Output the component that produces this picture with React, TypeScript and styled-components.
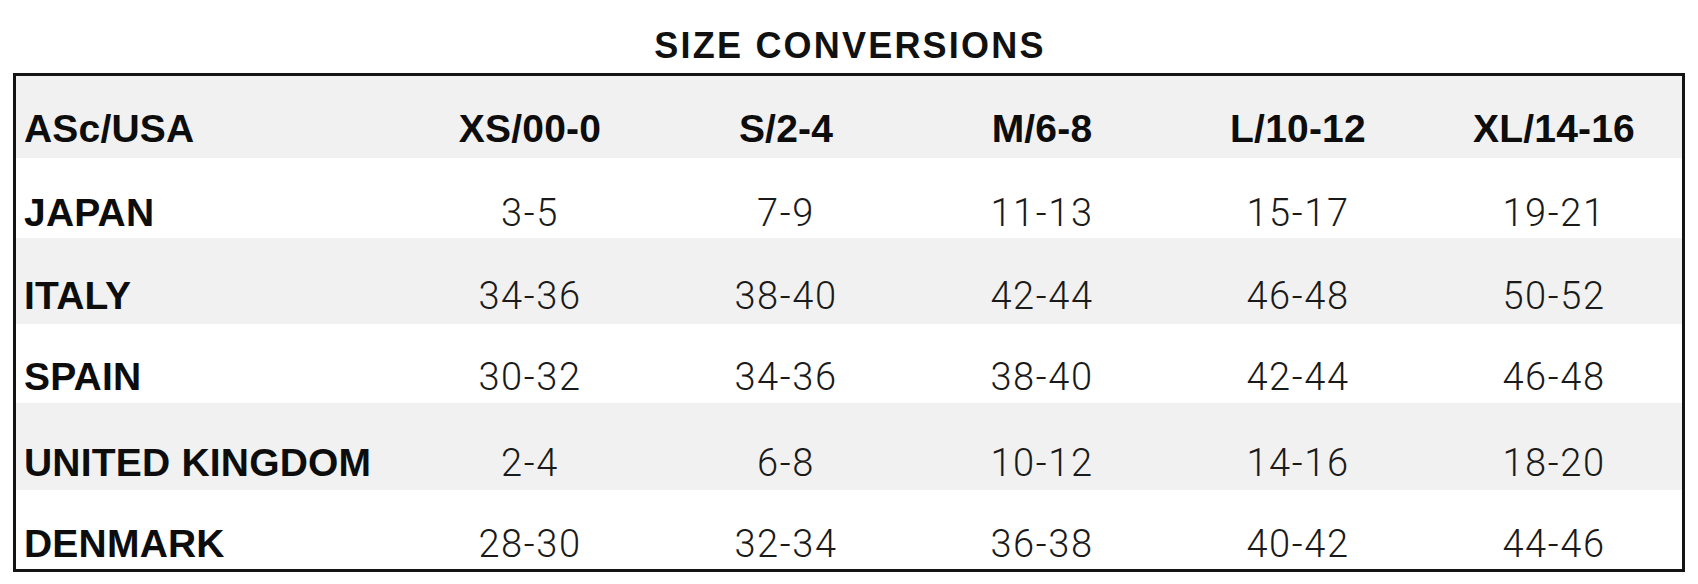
import * as React from 'react'
import styled, { createGlobalStyle } from 'styled-components'

const GlobalStyle = createGlobalStyle`
  html, body {
    margin: 0;
    padding: 0;
    background: #ffffff;
  }
  body {
    font-family: 'Liberation Sans', Arial, sans-serif;
    color: #111111;
  }
`

interface IRow {
  label: string
  values: string[]
  height: number
  bottom: number
  shaded: boolean
}

const HEADERS = ['XS/00-0', 'S/2-4', 'M/6-8', 'L/10-12', 'XL/14-16']

const ROWS: IRow[] = [
  { label: 'JAPAN', values: ['3-5', '7-9', '11-13', '15-17', '19-21'], height: 80, bottom: 6, shaded: false },
  { label: 'ITALY', values: ['34-36', '38-40', '42-44', '46-48', '50-52'], height: 86, bottom: 9, shaded: true },
  { label: 'SPAIN', values: ['30-32', '34-36', '38-40', '42-44', '46-48'], height: 79, bottom: 7, shaded: false },
  { label: 'UNITED KINGDOM', values: ['2-4', '6-8', '10-12', '14-16', '18-20'], height: 87, bottom: 8, shaded: true },
  { label: 'DENMARK', values: ['28-30', '32-34', '36-38', '40-42', '44-46'], height: 79, bottom: 6, shaded: false },
]

const App = () => {
  return (
    <Page>
      <GlobalStyle />
      <Title>SIZE CONVERSIONS</Title>
      <Table>
        <Row height={82} bottom={10} shaded>
          <Label>ASc/USA</Label>
          {HEADERS.map(h => (
            <HeadCell key={h}>{h}</HeadCell>
          ))}
        </Row>
        {ROWS.map(row => (
          <Row key={row.label} height={row.height} bottom={row.bottom} shaded={row.shaded}>
            <Label>{row.label}</Label>
            {row.values.map((v, i) => (
              <Cell key={i}>{v}</Cell>
            ))}
          </Row>
        ))}
      </Table>
    </Page>
  )
}

const Page = styled.div`
  width: 1672px;
  padding: 28px 0 0 13px;
  display: flex;
  flex-direction: column;
`

const Title = styled.h1`
  margin: 0 0 9px;
  font-size: 36px;
  line-height: 1;
  font-weight: 700;
  letter-spacing: 2.2px;
  text-align: center;
  padding-left: 2px;
`

const Table = styled.div`
  border: 3px solid #141414;
  display: flex;
  flex-direction: column;
`

const Row = styled.div<{ height: number; bottom: number; shaded?: boolean }>`
  display: grid;
  grid-template-columns: 386px repeat(5, 1fr);
  align-items: end;
  box-sizing: border-box;
  height: ${props => props.height}px;
  padding-bottom: ${props => props.bottom}px;
  background: ${props => (props.shaded ? '#f1f1f1' : '#ffffff')};
`

const Label = styled.div`
  padding-left: 8px;
  font-size: 39px;
  line-height: 1;
  font-weight: 700;
  letter-spacing: 0.2px;
  white-space: nowrap;
  color: #0d0d0d;
`

const HeadCell = styled.div`
  text-align: center;
  font-size: 39px;
  line-height: 1;
  font-weight: 700;
  letter-spacing: 0.2px;
  color: #0d0d0d;
`

const Cell = styled.div`
  text-align: center;
  font-family: Roboto, 'Liberation Sans', sans-serif;
  font-weight: 300;
  font-size: 38px;
  line-height: 1;
  letter-spacing: 1.6px;
  color: #1a1a1a;
`

export default App
